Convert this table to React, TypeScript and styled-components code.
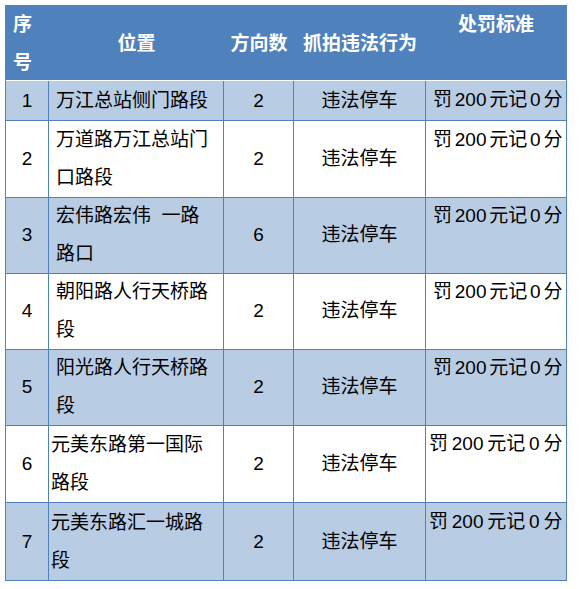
import styled, { createGlobalStyle } from "styled-components";

const GlobalStyle = createGlobalStyle`
  html, body {
    margin: 0;
    padding: 0;
    background: #ffffff;
  }
  body {
    font-family: "Liberation Sans", "Noto Sans CJK SC", sans-serif;
  }
`;

const Page = styled.div`
  padding: 5px;
`;

const Table = styled.div`
  width: 562px;
  box-sizing: border-box;
  border: 1px solid #4f81bd;
  border-bottom: none;
  font-size: 19px;
  line-height: 38px;
  color: #000000;
`;

const COLS = "43px 175px 70px 132px 140px";

const HeadRow = styled.div`
  display: grid;
  grid-template-columns: ${COLS};
  height: 75px;
  box-sizing: border-box;
  background: #4f81bd;
  border-bottom: 1px solid #ffffff;
`;

const HeadCell = styled.div<{ $left?: boolean; $top?: boolean }>`
  display: flex;
  align-items: ${(p) => (p.$top ? "flex-start" : "center")};
  justify-content: ${(p) => (p.$left ? "flex-start" : "center")};
  padding-left: ${(p) => (p.$left ? "7px" : "0")};
  color: #ffffff;
  font-weight: bold;
  text-align: ${(p) => (p.$left ? "left" : "center")};
`;

const Row = styled.div<{ $shaded: boolean; $h: number }>`
  display: grid;
  grid-template-columns: ${COLS};
  height: ${(p) => p.$h}px;
  background: ${(p) => (p.$shaded ? "#b8cce4" : "#ffffff")};
`;

const Cell = styled.div<{ $left?: boolean; $top?: boolean; $pad?: number; $last?: boolean }>`
  display: flex;
  box-sizing: border-box;
  align-items: ${(p) => (p.$top ? "flex-start" : "center")};
  justify-content: ${(p) => (p.$left ? "flex-start" : "center")};
  padding-left: ${(p) => p.$pad ?? 0}px;
  border-bottom: 1px solid #4f81bd;
  border-right: ${(p) => (p.$last ? "none" : "1px solid #4f81bd")};
  white-space: pre;
`;

const Fine = styled.span<{ $ws: number }>`
  word-spacing: ${(p) => p.$ws}px;
`;

type Item = {
  no: number;
  place: string[];
  dir: number;
  act: string;
  wide?: boolean;
};

const items: Item[] = [
  { no: 1, place: ["万江总站侧门路段"], dir: 2, act: "违法停车" },
  { no: 2, place: ["万道路万江总站门", "口路段"], dir: 2, act: "违法停车" },
  { no: 3, place: ["宏伟路宏伟  一路", "路口"], dir: 6, act: "违法停车" },
  { no: 4, place: ["朝阳路人行天桥路", "段"], dir: 2, act: "违法停车" },
  { no: 5, place: ["阳光路人行天桥路", "段"], dir: 2, act: "违法停车" },
  { no: 6, place: ["元美东路第一国际", "路段"], dir: 2, act: "违法停车", wide: true },
  { no: 7, place: ["元美东路汇一城路", "段"], dir: 2, act: "违法停车", wide: true },
];

export default function App() {
  return (
    <Page>
      <GlobalStyle />
      <Table>
        <HeadRow>
          <HeadCell $left>
            <span>序<br />号</span>
          </HeadCell>
          <HeadCell>位置</HeadCell>
          <HeadCell>方向数</HeadCell>
          <HeadCell>抓拍违法行为</HeadCell>
          <HeadCell $top>处罚标准</HeadCell>
        </HeadRow>
        {items.map((it, i) => (
          <Row key={it.no} $shaded={i % 2 === 0} $h={it.place.length === 1 ? 40 : it.wide ? 78 : 76}>
            <Cell>{it.no}</Cell>
            <Cell $left $pad={it.wide ? 2 : 7}>
              <span>
                {it.place.map((line, j) => (
                  <span key={j}>
                    {j > 0 && <br />}
                    {line}
                  </span>
                ))}
              </span>
            </Cell>
            <Cell>{it.dir}</Cell>
            <Cell>{it.act}</Cell>
            <Cell $left $top $last $pad={it.wide ? 3 : 7}>
              <Fine $ws={it.wide ? -1.5 : -2.5}>罚 200 元记 0 分</Fine>
            </Cell>
          </Row>
        ))}
      </Table>
    </Page>
  );
}
